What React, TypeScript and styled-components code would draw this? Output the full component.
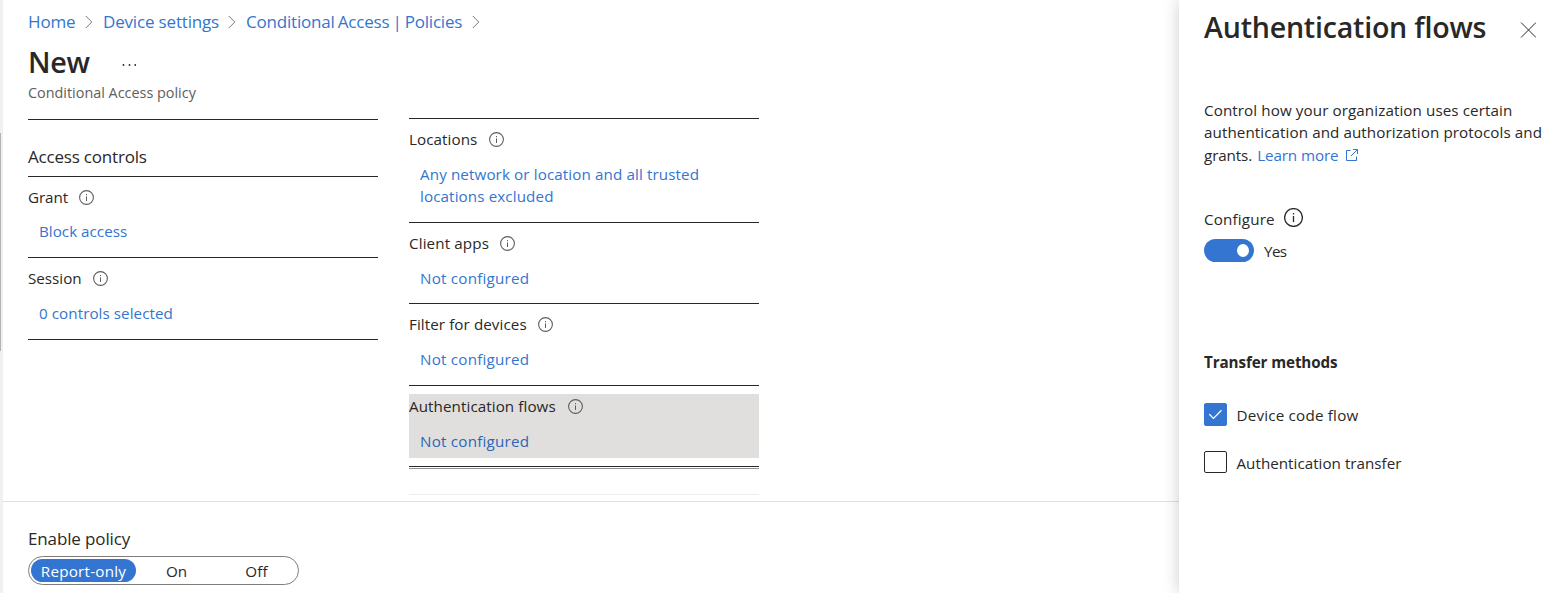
import React from "react";
import styled, { createGlobalStyle, css } from "styled-components";

const ink = "#292827";
const blue = "#3375d1";

const GlobalStyle = createGlobalStyle`
  * { box-sizing: border-box; }
  body {
    margin: 0;
    background: #fff;
    color: ${ink};
    font: 15.2px/22px "Open Sans", "Noto Sans", sans-serif;
    overflow: hidden;
  }
  h1, h2, h3, p { margin: 0; font: inherit; }
  a { color: ${blue}; text-decoration: none; }
  button { font: inherit; color: inherit; border: 0; background: none; padding: 0; text-align: left; }
`;

const Page = styled.div`
  display: grid;
  grid-template-columns: 3px 1176px 388px;
  height: 593px;
  overflow: hidden;
`;

const ScrollGutter = styled.div`
  background: #f0f0f0;
  padding-top: 133px;
`;

const ScrollThumb = styled.div`
  width: 1px;
  height: 218px;
  background: #b4b4b4;
`;

const Text = styled.span<{ $track?: number; $wordGap?: number }>`
  white-space: nowrap;
  letter-spacing: ${(p) => p.$track ?? 0}px;
  word-spacing: ${(p) => p.$wordGap ?? 0}px;
`;

const Blade = styled.main`
  display: grid;
  grid-template-rows: 118px 383px 92px;
  min-width: 0;
`;

const Header = styled.header`
  padding: 9px 0 0 25px;
`;

const Breadcrumb = styled.nav`
  display: flex;
  align-items: center;
  height: 25px;
  font-size: 17px;
  line-height: 25px;
`;

const Crumb = styled.a<{ $width: number }>`
  display: block;
  width: ${(p) => p.$width}px;
`;

const CrumbChevron = styled.svg`
  width: 8px;
  height: 14px;
  margin: 1px 10px 0 10px;
`;

const TitleRow = styled.div`
  display: flex;
  align-items: center;
  height: 40px;
  margin-top: 8px;
`;

const BladeTitle = styled.h1`
  width: 94px;
  font-size: 28.8px;
  font-weight: 600;
  line-height: 40px;
`;

const MoreDots = styled.svg`
  width: 15px;
  height: 4px;
  margin-top: 5px;
`;

const Subtitle = styled.p`
  font-size: 14.4px;
  color: #605e5c;
  line-height: 22px;
`;

const Columns = styled.div`
  display: grid;
  grid-template-columns: 350px 350px;
  column-gap: 31px;
  padding-left: 25px;
  border-bottom: 1px solid #e1dfdd;
  height: 384px;
`;

const Column = styled.section<{ $offset?: number }>`
  padding-top: ${(p) => p.$offset ?? 0}px;
`;

const Rule = styled.div<{ $color?: string; $before?: number }>`
  height: 1px;
  margin-top: ${(p) => p.$before ?? 0}px;
  background: ${(p) => p.$color ?? ink};
`;

const GroupHeading = styled.h2`
  box-sizing: content-box;
  height: 31px;
  padding-top: 25px;
  font-size: 17px;
  line-height: 24px;
  border-bottom: 1px solid ${ink};
`;

const Setting = styled.div<{ $tail?: number }>`
  padding: 8px 0 ${(p) => p.$tail ?? 8}px;
  border-bottom: 1px solid ${ink};
`;

const SettingBody = styled.div<{ $active?: boolean; $gap?: number }>`
  display: grid;
  row-gap: ${(p) => p.$gap ?? 13}px;
  padding: 1px 0 6px;
  ${(p) =>
    p.$active &&
    css`
      background: #e0dfdd;
      a { color: #2b66b8; }
    `}
`;

const SettingLabel = styled.h3<{ $iconGap?: number }>`
  display: flex;
  align-items: center;
  gap: ${(p) => p.$iconGap ?? 11}px;
`;

const SettingValue = styled.a`
  padding-left: 11px;
  display: grid;
`;

const InfoSvg = styled.svg<{ $size: number }>`
  flex: none;
  width: ${(p) => p.$size}px;
  height: ${(p) => p.$size}px;
`;

const Footer = styled.footer`
  padding: 25px 0 0 25px;
`;

const FieldName = styled.p`
  font-size: 17px;
  line-height: 25px;
`;

const Segmented = styled.div`
  display: grid;
  grid-template-columns: 105px 81px 79px;
  width: 271px;
  height: 29px;
  margin-top: 5px;
  padding: 2px;
  border: 1px solid #7f7d7b;
  border-radius: 15px;
`;

const Segment = styled.button<{ $selected?: boolean }>`
  height: 23px;
  padding-top: 1px;
  line-height: 23px;
  border-radius: 12px;
  text-align: center;
  ${(p) =>
    p.$selected &&
    css`
      background: ${blue};
      color: #fff;
    `}
`;

const Panel = styled.aside`
  padding: 7px 0 0 25px;
  background: #fff;
  box-shadow: 0 0 16px rgba(0, 0, 0, 0.2);
  position: relative;
`;

const PanelHeader = styled.div`
  display: flex;
  align-items: center;
  height: 40px;
`;

const PanelTitle = styled.h2`
  width: 316px;
  font-size: 28.6px;
  font-weight: 600;
  line-height: 40px;
`;

const CloseButton = styled.button`
  display: flex;
  margin-top: 5px;
`;

const Description = styled.p`
  display: grid;
  margin-top: 52px;
  line-height: 22.4px;
`;

const LinkLine = styled.span`
  display: flex;
  align-items: center;
`;

const LearnMore = styled.a`
  display: flex;
  align-items: center;
  gap: 8px;
  margin-left: 5px;
`;

const ConfigureLabel = styled.div`
  display: flex;
  gap: 9px;
  height: 22px;
  margin-top: 42px;
`;

const ToggleRow = styled.div`
  display: flex;
  gap: 10px;
  margin-top: 9px;
  height: 23px;
`;

const Toggle = styled.button`
  display: flex;
  justify-content: flex-end;
  align-items: center;
  width: 50px;
  height: 23px;
  padding-right: 5px;
  border-radius: 12px;
  background: ${blue};
`;

const ToggleKnob = styled.span`
  width: 12px;
  height: 13px;
  border-radius: 50%;
  background: #fff;
`;

const ToggleValue = styled.span`
  padding-top: 1px;
`;

const TransferHeading = styled.h3`
  margin-top: 89px;
  font-weight: 700;
`;

const Options = styled.div`
  display: grid;
  row-gap: 25px;
  margin-top: 30px;
`;

const Option = styled.label`
  display: flex;
  gap: 9.5px;
  height: 23px;
`;

const Box = styled.span<{ $checked?: boolean }>`
  display: flex;
  width: 23px;
  height: ${(p) => (p.$checked ? 23 : 22)}px;
  border-radius: 2px;
  border: 1px solid ${(p) => (p.$checked ? blue : ink)};
  background: ${(p) => (p.$checked ? blue : "#fff")};
`;

const OptionName = styled.span`
  padding-top: 1px;
`;

const Info = ({ size = 15, color = "#605e5c" }: { size?: number; color?: string }) => (
  <InfoSvg $size={size} viewBox={`0 0 ${size} ${size}`} fill="none" stroke={color}>
    <circle cx={size / 2} cy={size / 2} r={size / 2 - 0.6} strokeWidth={size > 15 ? 1.3 : 1.1} />
    <path d={size > 15 ? "M9.5 8v6M9.5 5v1.5" : "M7.5 6.4v4.6M7.5 4v1.2"} strokeWidth={size > 15 ? 1.3 : 1} />
  </InfoSvg>
);

const Chevron = () => (
  <CrumbChevron viewBox="0 0 8 14" fill="none" stroke="#7a7876">
    <path d="M.8 1l6 6-6 6" />
  </CrumbChevron>
);

type SettingProps = {
  label: string;
  labelTrack?: number;
  iconGap?: number;
  lines: string[];
  track?: number;
  active?: boolean;
  tail?: number;
  gap?: number;
};

const SettingItem = ({ label, labelTrack = 0.08, iconGap, lines, track = 0.11, active, tail, gap }: SettingProps) => (
  <Setting $tail={tail}>
    <SettingBody $active={active} $gap={gap}>
      <SettingLabel $iconGap={iconGap}>
        <Text $track={labelTrack}>{label}</Text>
        <Info />
      </SettingLabel>
      <SettingValue href="#">
        {lines.map((line) => (
          <Text key={line} $track={track}>{line}</Text>
        ))}
      </SettingValue>
    </SettingBody>
  </Setting>
);

export default function App() {
  return (
    <>
      <GlobalStyle />
      <Page>
        <ScrollGutter><ScrollThumb /></ScrollGutter>
        <Blade>
          <Header>
            <Breadcrumb>
              <Crumb href="#" $width={47}><Text $track={-0.15}>Home</Text></Crumb>
              <Chevron />
              <Crumb href="#" $width={115}><Text $track={-0.17}>Device settings</Text></Crumb>
              <Chevron />
              <Crumb href="#" $width={216}><Text $track={-0.2} $wordGap={-1.1}>Conditional Access | Policies</Text></Crumb>
              <Chevron />
            </Breadcrumb>
            <TitleRow>
              <BladeTitle><Text $track={-0.36}>New</Text></BladeTitle>
              <MoreDots viewBox="0 0 15 4" fill={ink}>
                <circle cx="1.5" cy="2" r=".9" />
                <circle cx="7.5" cy="2" r=".9" />
                <circle cx="13.2" cy="2" r=".9" />
              </MoreDots>
            </TitleRow>
            <Subtitle><Text>Conditional Access policy</Text></Subtitle>
          </Header>
          <Columns>
            <Column $offset={1}>
              <Rule />
              <GroupHeading><Text $track={-0.19}>Access controls</Text></GroupHeading>
              <SettingItem label="Grant" labelTrack={-0.08} lines={["Block access"]} track={0.02} gap={12} tail={9} />
              <SettingItem label="Session" labelTrack={0} lines={["0 controls selected"]} track={0.06} tail={9} />
            </Column>
            <Column>
              <Rule />
              <SettingItem
                label="Locations"
                iconGap={12}
                lines={["Any network or location and all trusted", "locations excluded"]}
                tail={9}
              />
              <SettingItem label="Client apps" labelTrack={0.12} lines={["Not configured"]} track={0.22} />
              <SettingItem label="Filter for devices" lines={["Not configured"]} track={0.22} tail={9} />
              <SettingItem label="Authentication flows" iconGap={12} lines={["Not configured"]} track={0.22} active />
              <Rule $color="#949392" $before={1} />
              <Rule $color="#f0efee" $before={25} />
            </Column>
          </Columns>
          <Footer>
            <FieldName><Text $track={-0.13}>Enable policy</Text></FieldName>
            <Segmented>
              <Segment $selected><Text $track={0.24}>Report-only</Text></Segment>
              <Segment>On</Segment>
              <Segment><Text $track={0.15}>Off</Text></Segment>
            </Segmented>
          </Footer>
        </Blade>
        <Panel>
          <PanelHeader>
            <PanelTitle><Text $track={-0.22}>Authentication flows</Text></PanelTitle>
            <CloseButton aria-label="Close">
              <svg width="16" height="16" viewBox="0 0 16 16" fill="none" stroke={ink}>
                <path d="M1 .5l15 15M16 .5l-15 15" />
              </svg>
            </CloseButton>
          </PanelHeader>
          <Description>
            <Text $track={0.09}>Control how your organization uses certain</Text>
            <Text $track={0.08}>authentication and authorization protocols and</Text>
            <LinkLine>
              <Text $track={-0.1}>grants.</Text>
              <LearnMore href="#">
                <Text $track={-0.1}>Learn more</Text>
                <svg width="12" height="12" viewBox="0 0 12 12" fill="none" stroke={blue}>
                  <path d="M4.5 1.5h-4v10h10v-4M7 .5h4.5V5M11.2.8L5 7" />
                </svg>
              </LearnMore>
            </LinkLine>
          </Description>
          <ConfigureLabel>
            <Text $track={0.16}>Configure</Text>
            <Info size={19} color={ink} />
          </ConfigureLabel>
          <ToggleRow>
            <Toggle aria-label="Configure"><ToggleKnob /></Toggle>
            <ToggleValue><Text $track={-0.6}>Yes</Text></ToggleValue>
          </ToggleRow>
          <TransferHeading><Text $track={-0.1}>Transfer methods</Text></TransferHeading>
          <Options>
            <Option>
              <Box $checked>
                <svg width="21" height="21" viewBox="0 0 21 21" fill="none" stroke="#fff" strokeWidth="1.3">
                  <path d="M4.3 10.2l4.2 4.2 8-8.2" />
                </svg>
              </Box>
              <OptionName><Text $track={0.2}>Device code flow</Text></OptionName>
            </Option>
            <Option>
              <Box />
              <OptionName><Text $track={0.02}>Authentication transfer</Text></OptionName>
            </Option>
          </Options>
        </Panel>
      </Page>
    </>
  );
}
